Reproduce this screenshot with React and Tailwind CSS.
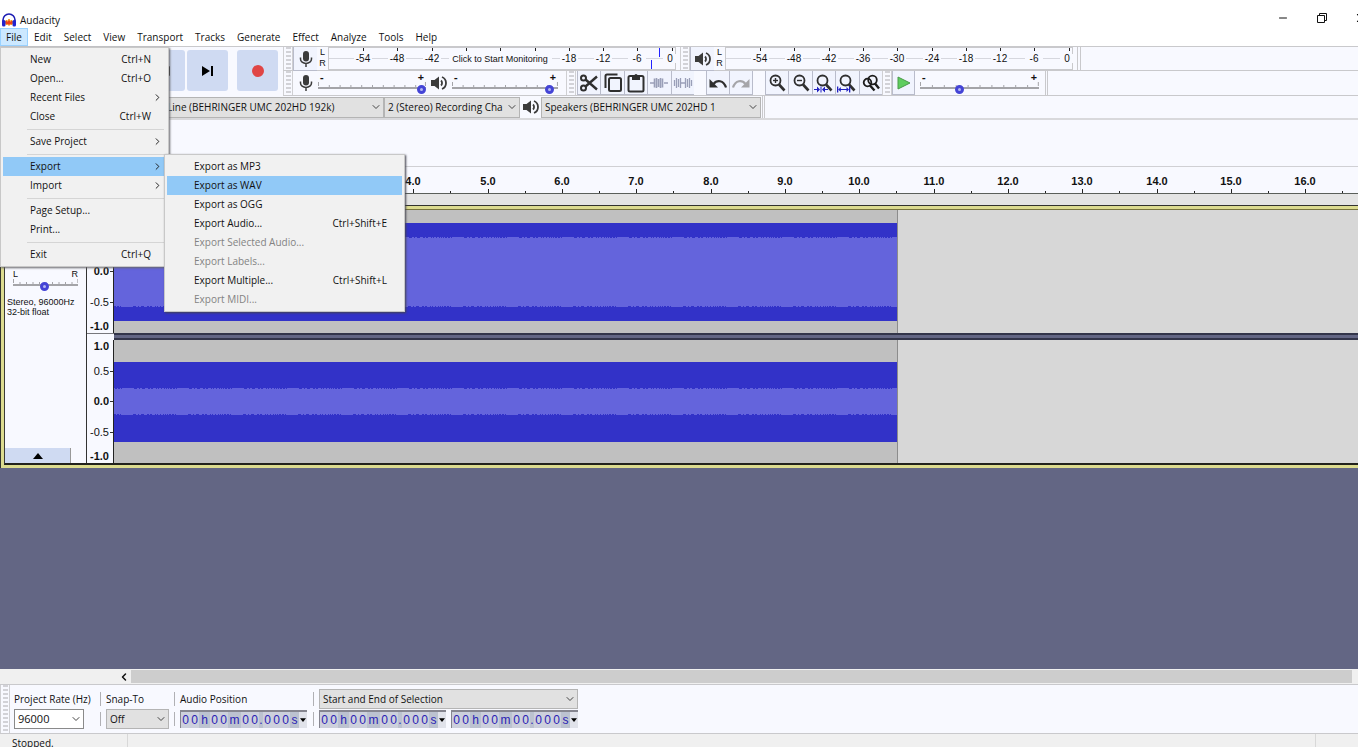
import clsx from 'clsx';
import { ChevronDown, ChevronLeft, ChevronRight, Minus, X } from 'lucide-react';

const MENUS = ['Edit', 'Select', 'View', 'Transport', 'Tracks', 'Generate', 'Effect', 'Analyze', 'Tools', 'Help'];

const FILE_MENU = [
  [
    { label: 'New', keys: 'Ctrl+N' },
    { label: 'Open...', keys: 'Ctrl+O' },
    { label: 'Recent Files', sub: true },
    { label: 'Close', keys: 'Ctrl+W' },
  ],
  [{ label: 'Save Project', sub: true }],
  [
    { label: 'Export', sub: true, active: true },
    { label: 'Import', sub: true },
  ],
  [{ label: 'Page Setup...' }, { label: 'Print...' }],
  [{ label: 'Exit', keys: 'Ctrl+Q' }],
];

const EXPORT_MENU = [
  { label: 'Export as MP3' },
  { label: 'Export as WAV', active: true },
  { label: 'Export as OGG' },
  { label: 'Export Audio...', keys: 'Ctrl+Shift+E' },
  { label: 'Export Selected Audio...', disabled: true },
  { label: 'Export Labels...', disabled: true },
  { label: 'Export Multiple...', keys: 'Ctrl+Shift+L' },
  { label: 'Export MIDI...', disabled: true },
];

//
// ─── ICONS ────────────────────────────────────────────────────────
//
const Logo = () => (
  <svg viewBox="0 0 16 16" className="size-4" aria-hidden="true">
    <path d="M2 10V8a6 6 0 0 1 12 0v2" fill="none" stroke="#1d1db4" strokeWidth="1.6" />
    <path d="M4 10.500l1.500-2.500 1 1.500L8 7l1.500 2.500 1-1.500 1.500 2.500-1.500 2.500-1-1L8 13.500 6.500 12l-1 1z" fill="#f0401c" stroke="#f79a1c" strokeWidth="1" />
    <rect x="1" y="8" width="3.500" height="6.500" rx="1.500" fill="#2222cf" />
    <rect x="11.500" y="8" width="3.500" height="6.500" rx="1.500" fill="#2222cf" />
  </svg>
);

const MicIcon = () => (
  <svg viewBox="0 0 16 18" className="h-[18px] w-4" aria-hidden="true">
    <rect x="5" y="1" width="6" height="10.500" rx="3" fill="#3b3b3b" />
    <path d="M2.500 7.500V9a5.500 4.500 0 0 0 11 0V7.500M8 13.500V17" fill="none" stroke="#3b3b3b" strokeWidth="1.500" />
  </svg>
);

const SpeakerIcon = () => (
  <svg viewBox="0 0 18 16" className="h-4 w-[18px]" aria-hidden="true">
    <path d="M1 5h3.500L9 1.500v13L4.500 11H1z" fill="#3b3b3b" />
    <path d="M11 5.500a3.500 3.500 0 0 1 0 5M12 2a6.500 6.500 0 0 1 0 12" fill="none" stroke="#3b3b3b" strokeWidth="1.800" />
  </svg>
);

const CutIcon = () => (
  <svg viewBox="0 0 20 20" className="size-5" fill="none" stroke="#2f2f2f" strokeWidth="2" aria-hidden="true">
    <circle cx="4.500" cy="5" r="2.500" />
    <circle cx="4.500" cy="15" r="2.500" />
    <path d="M6.500 6.500L18 16.500M6.500 13.500L18 3.500" strokeWidth="2.400" />
  </svg>
);

const CopyIcon = () => (
  <svg viewBox="0 0 20 20" className="size-5" fill="none" stroke="#2f2f2f" strokeWidth="2" aria-hidden="true">
    <rect x="6" y="5" width="12" height="13" rx="1.500" />
    <path d="M2.500 15V3a1.500 1.500 0 0 1 1.500-1.500h10.500" />
  </svg>
);

const PasteIcon = () => (
  <svg viewBox="0 0 20 20" className="size-5" fill="none" stroke="#2f2f2f" strokeWidth="2" aria-hidden="true">
    <rect x="2.500" y="3" width="15" height="15.500" rx="1.500" />
    <path d="M6 2.500h8V7H6z" fill="#2f2f2f" stroke="none" />
    <circle cx="10" cy="2.500" r="1.600" fill="#2f2f2f" stroke="none" />
  </svg>
);

const TrimIcon = () => (
  <svg viewBox="0 0 20 20" className="size-5" stroke="#9a9fb8" aria-hidden="true">
    <path d="M1 10h4M15 10h4" strokeWidth="1.500" />
    <path d="M5.500 5.500v9M7.500 5v10M9.500 6v8M11.500 5v10M13.500 5.500v9" strokeWidth="1.600" />
  </svg>
);

const SilenceIcon = () => (
  <svg viewBox="0 0 20 20" className="size-5" stroke="#9a9fb8" aria-hidden="true">
    <path d="M7 10h6" strokeWidth="1.500" />
    <path d="M1.500 7v6M3.500 5v10M5.500 6v8M7.500 5v10M12.500 5v10M14.500 6v8M16.500 5v10M18.500 7v6" strokeWidth="1.300" />
  </svg>
);

const UndoIcon = ({ redo }) => (
  <svg viewBox="0 0 20 20" className={clsx('size-5', redo && '-scale-x-100')} aria-hidden="true">
    <path d="M5.500 11C9 6.500 15.500 7 18 14.500" fill="none" stroke={redo ? '#a5a5a9' : '#2f2f2f'} strokeWidth="2.200" />
    <path d="M1.500 6v8.500H10z" fill={redo ? '#a5a5a9' : '#2f2f2f'} />
  </svg>
);

const ZoomIcon = ({ kind }) => (
  <svg viewBox="0 0 20 20" className="size-5" fill="none" stroke="#2f2f2f" aria-hidden="true">
    <circle cx="8.500" cy="7.500" r="5" strokeWidth="1.800" />
    <path d="M12 11.500l5.500 6" strokeWidth="2.600" />
    {(kind === 'in' || kind === 'out') && <path d="M6 7.500h5" strokeWidth="1.400" />}
    {kind === 'in' && <path d="M8.500 5v5" strokeWidth="1.400" />}
    {kind === 'selection' && (
      <path d="M0 16h3v-2.500l3 3-3 3V17H0zM14 16h-3v-2.500l-3 3 3 3V17h3zM6.500 13.500h1v6h-1z" stroke="none" fill="#2020c0" />
    )}
    {kind === 'project' && (
      <path
        d="M0 13.500h1.300V19.500H0zM12 13.500h1.300V19.500H12zM1.300 16.500l2.500-2.500v2h5.700v-2l2.500 2.500-2.500 2.500v-2H3.800v2z"
        stroke="none"
        fill="#2020c0"
      />
    )}
  </svg>
);

const ZoomToggleIcon = () => (
  <svg viewBox="0 0 20 20" className="size-5" fill="none" stroke="#1c1c1c" aria-hidden="true">
    <circle cx="6.500" cy="9.500" r="3.800" strokeWidth="1.800" />
    <circle cx="11.500" cy="7" r="4.300" strokeWidth="1.800" />
    <path d="M9 12.500l4.500 5M14 10.500l4 5" strokeWidth="2.400" />
  </svg>
);

//
// ─── SMALL CONTROLS ───────────────────────────────────────────────
//
const Grip = ({ className }) => (
  <span
    className={clsx(
      'w-[10px] shrink-0 border-x border-[#cfcfd2] bg-[repeating-linear-gradient(to_bottom,#d2d2d7_0_2px,transparent_2px_4px)] bg-[length:5px_100%] bg-center bg-no-repeat',
      className,
    )}
  />
);

const ToolButton = ({ label, children, className }) => (
  <button
    aria-label={label}
    className={clsx('flex h-6 items-center justify-center border-b border-l border-[#b9bccb] bg-[#f1f4fe]', className)}
  >
    {children}
  </button>
);

const Slider = ({ label, value, className, ticks = 10 }) => (
  <span className={clsx('grid items-end', className)}>
    <svg className="col-start-1 row-start-1 h-2 w-full" aria-hidden="true">
      {Array.from({ length: ticks + 1 }, (_, i) => (
        <rect key={i} x={i === ticks ? '99%' : `${(i * 100) / ticks}%`} y={i % ticks ? 3 : 0} width="1" height="4" fill="#a4a4a8" />
      ))}
      <rect y="5" width="100%" height="2" fill="#a4a4a8" />
    </svg>
    <input
      type="range"
      aria-label={label}
      defaultValue={value}
      className="col-start-1 row-start-1 m-0 -mb-1 h-[10px] w-full appearance-none bg-transparent [&::-webkit-slider-thumb]:size-[9px] [&::-webkit-slider-thumb]:appearance-none [&::-webkit-slider-thumb]:rounded-full [&::-webkit-slider-thumb]:border-[3px] [&::-webkit-slider-thumb]:border-[#4444d6] [&::-webkit-slider-thumb]:bg-[#b4b8f0]"
    />
  </span>
);

const VolumeSlider = ({ label, value, className }) => (
  <span className={clsx('flex h-[22px] flex-col', className)}>
    <span className="flex justify-between px-[2px] text-[11px] leading-[10px] font-bold" aria-hidden="true">
      <span>-</span>
      <span>+</span>
    </span>
    <Slider label={label} value={value} className="h-2 w-full" />
  </span>
);

const Select = ({ id, label, value, className, white }) => (
  <span className={clsx('grid items-center', className)}>
    <select
      id={id}
      aria-label={label}
      defaultValue={value}
      className={clsx(
        'col-start-1 row-start-1 h-full w-full min-w-0 appearance-none overflow-hidden rounded-none border pr-4 pl-[3px] text-left whitespace-nowrap',
        white ? 'border-[#8a8a8a] bg-white text-[11px]' : 'border-[#b4b4b4] bg-[#e1e1e1]',
      )}
    >
      <option>{value}</option>
    </select>
    <ChevronDown className="pointer-events-none col-start-1 row-start-1 mr-[2px] size-3 justify-self-end" stroke="#444" strokeWidth={2} />
  </span>
);

const Meter = ({ labels, message, peaks = [] }) => (
  <svg width="348" height="23" className="shrink-0 bg-[#f8f9ff] font-['Liberation_Sans',sans-serif] text-[10px]">
    <path d="M0 .5H348M0 22.500H348M.5 0V23M347.500 0V23" stroke="#c9c9cc" />
    <path d="M1 11.500H348" stroke="#d6d7de" />
    {labels.map((db, i) => {
      const x = Math.round(35 + i * 34.3);
      return (
        <g key={i}>
          <rect x={x} y="1" width="1" height="3" fill="#222" />
          {db !== null && (
            <>
              <rect x={x - 9} y="7" width="18" height="9" fill="#f8f9ff" />
              <text x={db === '0' ? x - 2 : x} y="15" textAnchor="middle" fill="#111">
                {db}
              </text>
            </>
          )}
        </g>
      );
    })}
    {message && (
      <>
        <rect x="121" y="6" width="103" height="12" fill="#f8f9ff" />
        <text x="172" y="15" textAnchor="middle" fill="#111" className="text-[9px]">
          {message}
        </text>
      </>
    )}
    {peaks.map((p) => (
      <rect key={p.x} x={p.x} y={p.y} width="1" height="9" fill="#2222ff" />
    ))}
  </svg>
);

const LeftRight = () => (
  <span className="flex w-[11px] shrink-0 flex-col items-center font-['Liberation_Sans',sans-serif] text-[9px] leading-[11px]">
    <span>L</span>
    <span>R</span>
  </span>
);

const TIME = '00h00m00.000s';

const TimeField = ({ label }) => (
  <span
    role="group"
    aria-label={label}
    className="flex h-[18px] w-[127px] border-t-2 border-l border-[#85858f] bg-[#bcc2d0] font-['Liberation_Sans',sans-serif] text-xs leading-4 text-[#2a22b4]"
  >
    {TIME.split('').map((c, i) => (
      <span
        key={i}
        className={clsx(
          'text-center',
          c === '0' && 'w-[9px] bg-[#cdd0dc]',
          c === 'h' && 'w-[11px]',
          c === 'm' && 'w-[13px]',
          c === '.' && 'w-1',
          c === 's' && 'w-[9px]',
        )}
      >
        {c}
      </span>
    ))}
    <button aria-label={`${label} format`} className="flex flex-1 items-center justify-center bg-[#e0e2ea]">
      <svg viewBox="0 0 8 5" className="h-1 w-[6px]">
        <path d="M0 0h8L4 5z" fill="#000" />
      </svg>
    </button>
  </span>
);

//
// ─── MENUS ────────────────────────────────────────────────────────
//
const MenuItem = ({ item }) => (
  <button
    role="menuitem"
    disabled={item.disabled}
    className={clsx(
      'flex h-[19px] w-full items-center justify-between pr-[15px] pl-[27px] text-left whitespace-nowrap',
      item.active && 'bg-[#91c9f7]',
      item.disabled && 'text-[#838383]',
    )}
  >
    <span>{item.label}</span>
    {item.keys && <span>{item.keys}</span>}
    {item.sub && <ChevronRight className="-mr-3 size-[11px]" strokeWidth={2} />}
  </button>
);

const ExportMenu = () => (
  <div
    role="menu"
    className="absolute -top-[3px] left-[161px] z-20 w-[241px] border border-[#c8c8c8] bg-[#f1f1f1] px-[2px] py-[2px] shadow-[1px_1px_2px_#44444f]"
  >
    {EXPORT_MENU.map((item) => (
      <MenuItem key={item.label} item={item} />
    ))}
  </div>
);

const FileMenu = () => (
  <div
    role="menu"
    className="absolute top-full left-0 z-10 w-[169px] border border-[#c8c8c8] bg-[#f1f1f1] p-[2px] shadow-[1px_1px_2px_#66666a]"
  >
    {FILE_MENU.map((group, i) => (
      <div key={i}>
        {i > 0 && (
          <div className="mr-[2px] ml-6 flex h-[6px] items-center">
            <div className="h-px w-full bg-[#d5d5d5]" />
          </div>
        )}
        {group.map((item) => (
          <div key={item.label} className="relative">
            <MenuItem item={item} />
            {item.label === 'Export' && <ExportMenu />}
          </div>
        ))}
      </div>
    ))}
  </div>
);

const TitleBar = () => (
  <div className="flex h-7 items-end justify-between">
    <h1 className="flex items-center gap-[3px] pl-px leading-4">
      <Logo />
      Audacity
    </h1>
    <div className="-mr-[22px] flex">
      <button aria-label="Minimize" className="flex h-5 w-[39px] items-center justify-center">
        <Minus className="size-3" strokeWidth={2} />
      </button>
      <button aria-label="Restore" className="flex h-5 w-[39px] items-center justify-center">
        <svg viewBox="0 0 10 10" className="size-[10px]" fill="none" stroke="#111">
          <path d="M.5 2.500h7v7h-7zM2.500 2.500v-2h7v7h-2" />
        </svg>
      </button>
      <button aria-label="Close" className="flex h-5 w-[39px] items-center justify-center">
        <X className="size-[14px]" strokeWidth={2} />
      </button>
    </div>
  </div>
);

const MenuBar = () => (
  <nav className="flex h-[18px] items-start leading-[19px]">
    <div className="relative">
      <button className="h-[18px] w-7 border border-[#99d1ff] bg-[#cce8ff] leading-[17px]">File</button>
      <FileMenu />
    </div>
    {MENUS.map((name) => (
      <button key={name} className="px-[6px]">
        {name}
      </button>
    ))}
  </nav>
);

//
// ─── TOOLBARS ─────────────────────────────────────────────────────
//
const TRANSPORT = [
  { label: 'Pause', d: 'M15 15h4v12h-4zM22 15h4v12h-4z' },
  { label: 'Play', d: 'M15 14l12 7-12 7z' },
  { label: 'Stop', d: 'M15 15h12v12H15z' },
  { label: 'Skip to Start', d: 'M15 16h2v10h-2zM26 16v10l-8-5z' },
  { label: 'Skip to End', d: 'M15 16v10l8-5zM24 16h2v10h-2z' },
];

const Transport = () => (
  <div className="flex w-[283px] shrink-0 items-start gap-[2px] pt-[3px] pl-[15px]">
    {TRANSPORT.map((b) => (
      <button key={b.label} aria-label={b.label} className="size-[41px] rounded-[3px] bg-[#cfdaf2]">
        <svg viewBox="0 0 41 41" className="size-full">
          <path d={b.d} fill="#000" />
        </svg>
      </button>
    ))}
    <button aria-label="Record" className="ml-[7px] flex size-[41px] items-center justify-center rounded-[3px] bg-[#cfdaf2]">
      <span className="size-3 rounded-full bg-[#e04545]" />
    </button>
  </div>
);

const MeterRow = () => (
  <div className="flex h-6 border-b border-[#c9c9cc]">
    <Grip />
    <ToolButton label="Recording level" className="w-6">
      <MicIcon />
    </ToolButton>
    <LeftRight />
    <Meter
      labels={['-54', '-48', '-42', null, null, null, '-18', '-12', '-6', '0']}
      message="Click to Start Monitoring"
      peaks={[{ x: 331, y: 1 }, { x: 323, y: 13 }]}
    />
    <Grip className="ml-1" />
    <ToolButton label="Playback level" className="w-6">
      <SpeakerIcon />
    </ToolButton>
    <LeftRight />
    <Meter labels={['-54', '-48', '-42', '-36', '-30', '-24', '-18', '-12', '-6', '0']} />
    <span className="ml-1 w-1 border-x border-[#c9c9cc]" />
  </div>
);

const ToolsRow = () => (
  <div className="flex h-[25px] items-center border-b border-[#c9c9cc]">
    <Grip className="h-full" />
    <span className="flex w-[25px] justify-center">
      <MicIcon />
    </span>
    <VolumeSlider label="Recording volume" value={100} className="w-[108px]" />
    <span className="flex w-[26px] justify-center">
      <SpeakerIcon />
    </span>
    <VolumeSlider label="Playback volume" value={96} className="w-[106px]" />
    <Grip className="ml-2 h-full" />
    <div className="ml-px grid w-[117px] grid-cols-5">
      <ToolButton label="Cut"><CutIcon /></ToolButton>
      <ToolButton label="Copy"><CopyIcon /></ToolButton>
      <ToolButton label="Paste"><PasteIcon /></ToolButton>
      <ToolButton label="Trim audio"><TrimIcon /></ToolButton>
      <ToolButton label="Silence audio"><SilenceIcon /></ToolButton>
    </div>
    <div className="ml-3 grid w-[47px] grid-cols-2 border-r border-[#b9bccb]">
      <ToolButton label="Undo"><UndoIcon /></ToolButton>
      <ToolButton label="Redo"><UndoIcon redo /></ToolButton>
    </div>
    <div className="ml-3 grid w-[117px] grid-cols-5">
      <ToolButton label="Zoom in"><ZoomIcon kind="in" /></ToolButton>
      <ToolButton label="Zoom out"><ZoomIcon kind="out" /></ToolButton>
      <ToolButton label="Fit selection"><ZoomIcon kind="selection" /></ToolButton>
      <ToolButton label="Fit project"><ZoomIcon kind="project" /></ToolButton>
      <ToolButton label="Zoom toggle"><ZoomToggleIcon /></ToolButton>
    </div>
    <Grip className="h-full" />
    <ToolButton label="Play at speed" className="w-[23px] border-r">
      <svg viewBox="0 0 14 14" className="size-[14px]">
        <path d="M1 1v12l12-6z" fill="#5fce5f" stroke="#4a9a4a" />
      </svg>
    </ToolButton>
    <VolumeSlider label="Playback speed" value={32} className="ml-[5px] w-[119px]" />
    <span className="ml-[6px] h-full w-[3px] border-x border-[#c9c9cc]" />
  </div>
);

const DeviceRow = () => (
  <div className="flex h-6 items-center border-b-2 border-[#d9d9dc]">
    <Select label="Recording device" value="Line (BEHRINGER UMC 202HD 192k)" className="ml-[163px] h-[21px] w-[221px]" />
    <Select label="Recording channels" value="2 (Stereo) Recording Channels" className="h-[21px] w-[136px]" />
    <span className="flex w-[21px] justify-center">
      <SpeakerIcon />
    </span>
    <Select label="Playback device" value="Speakers (BEHRINGER UMC 202HD 1" className="h-[21px] w-[220px]" />
    <span className="ml-px h-full w-[3px] border-x border-[#c9c9cc]" />
  </div>
);

//
// ─── TRACKS ───────────────────────────────────────────────────────
//
const SECOND = 74.33;

const Ruler = () => (
  <svg className="h-[26px] w-full font-['Liberation_Sans',sans-serif] text-[11px] font-bold">
    {Array.from({ length: 34 }, (_, i) => {
      const x = Math.round(116 + (i * SECOND) / 2);
      return (
        <g key={i}>
          <rect x={x} y={i % 2 ? 24 : 22} width="1" height="4" fill="#222" />
          {i % 2 === 0 && (
            <text x={x} y="18" textAnchor="middle" fill="#111">
              {(i / 2).toFixed(1)}
            </text>
          )}
        </g>
      );
    })}
  </svg>
);

// flat band with a slightly ragged top and bottom edge
const band = (top, bottom, rough) => {
  const jag = (i) => ((i * 7 + ((i * i) % 11)) % 5 > 2 ? rough : 0);
  let d = `M0 ${top}`;
  for (let x = 0; x < 783; x += 1) d += `V${top + jag(x)}H${x + 1}`;
  d += `V${bottom}`;
  for (let x = 783; x > 0; x -= 1) d += `V${bottom - jag(x)}H${x - 1}`;
  return `${d}z`;
};

const Waveform = ({ peak, rms }) => (
  <svg viewBox="0 0 783 123" className="h-[123px] w-[783px] shrink-0 bg-[#c0c0c0]" aria-hidden="true">
    <rect y={peak[0]} width="783" height={peak[1] - peak[0]} fill="#3232c8" />
    <path d={band(rms[0], rms[1], 1)} fill="#6464dc" />
  </svg>
);

const SCALE = [
  { label: '1.0', row: 'h-[13px] font-bold' },
  { label: '0.5', row: 'h-9', tick: true },
  { label: '0.0', row: 'h-6 font-bold', tick: true },
  { label: '-0.5', row: 'h-[38px]', tick: true },
  { label: '-1.0', row: 'h-[10px] font-bold' },
];

const Channel = ({ peak, rms }) => (
  <div className="flex h-[123px] bg-[#d7d7d7]">
    <div className="flex w-[27px] shrink-0 flex-col border-r border-[#222] bg-[#f8f9ff] text-[11px] leading-[11px]">
      {SCALE.map((s) => (
        <span key={s.label} className={clsx('flex items-center justify-end gap-px', s.row, !s.tick && 'pr-1')}>
          {s.label}
          {s.tick && <span className="h-px w-[3px] bg-[#333]" />}
        </span>
      ))}
    </div>
    <Waveform peak={peak} rms={rms} />
    <span className="w-px bg-[#8c8c8c]" />
  </div>
);

const Track = () => (
  <div className="border-t border-l border-[#33332e] bg-[#dcdb8f] pt-[3px] pb-[3px] pl-[3px] font-['Liberation_Sans',sans-serif]">
    <div className="flex border-t border-b-2 border-l border-t-[#77733c] border-b-[#22221c] border-l-[#3a3a34]">
      <div className="flex w-[82px] shrink-0 flex-col border-r border-[#333] bg-[#f8f9ff]">
        <div className="mt-[60px] flex flex-col px-2 text-[9px] leading-[9px]">
          <span className="flex justify-between">
            <span>L</span>
            <span>R</span>
          </span>
          <Slider label="Pan" value={48} className="h-2 w-full" />
        </div>
        <p className="mt-[10px] pl-[2px] text-[9px] leading-[10px] whitespace-nowrap">
          Stereo, 96000Hz
          <br />
          32-bit float
        </p>
        <button aria-label="Collapse track" className="mt-auto flex h-[15px] w-[66px] items-center justify-center border-r border-[#999] bg-[#cfdaf2]">
          <svg viewBox="0 0 10 6" className="h-[6px] w-[10px]">
            <path d="M0 6h10L5 0z" fill="#000" />
          </svg>
        </button>
      </div>
      <div className="min-w-0 flex-1 overflow-hidden">
        <Channel peak={[13, 111]} rms={[27, 97]} />
        <div className="flex h-[7px]">
          <div className="w-[27px] border-t border-[#77777c] bg-[#f8f9ff]" />
          <div className="flex-1 border-y-2 border-[#33354a] bg-[#636684]" />
        </div>
        <Channel peak={[22, 102]} rms={[48, 75]} />
      </div>
    </div>
  </div>
);

//
// ─── BOTTOM BARS ──────────────────────────────────────────────────
//
const Divider = () => <span className="h-[14px] w-px bg-[#b0b0b4]" />;

const SelectionBar = () => (
  <div className="flex h-[50px] shrink-0 border-y border-y-[#c9c9cc] bg-[#f8f9ff]">
    <Grip />
    <div className="grid grid-cols-[86px_6px_68px_6px_133px_6px_259px] grid-rows-[20px_20px] items-center pt-1 pl-1">
      <label htmlFor="rate" className="whitespace-nowrap">Project Rate (Hz)</label>
      <Divider />
      <label htmlFor="snap">Snap-To</label>
      <Divider />
      <span>Audio Position</span>
      <Divider />
      <Select label="Selection mode" value="Start and End of Selection" className="h-5" />
      <Select id="rate" label="Project rate" value="96000" white className="h-5 w-[70px]" />
      <Divider />
      <Select id="snap" label="Snap to" value="Off" className="h-5 w-[63px]" />
      <Divider />
      <TimeField label="Audio position" />
      <Divider />
      <div className="flex justify-between">
        <TimeField label="Selection start" />
        <TimeField label="Selection end" />
      </div>
    </div>
  </div>
);

export default function App() {
  return (
    <div className="flex h-screen flex-col overflow-hidden bg-white font-['Open_Sans','Noto_Sans',sans-serif] text-[10px] text-[#111]">
      <TitleBar />
      <MenuBar />
      <header className="border-t border-[#c9c9cc] bg-[#f8f9ff]">
        <div className="flex">
          <Transport />
          <div className="min-w-0 flex-1">
            <MeterRow />
            <ToolsRow />
          </div>
        </div>
        <DeviceRow />
        <div className="h-[47px] border-b border-[#d0d0d4]" />
        <Ruler />
      </header>
      <main className="flex min-h-0 flex-1 flex-col bg-[#636684]">
        <div className="h-3 shrink-0 border-t border-[#5a5f5a] bg-[#e4e4e4]" />
        <Track />
      </main>
      <div className="flex h-[15px] shrink-0 items-center bg-[#f0f0f0] pr-[6px]">
        <button aria-label="Scroll left" className="flex w-[131px] justify-end pr-px">
          <ChevronLeft className="size-3" strokeWidth={3} />
        </button>
        <span className="h-[13px] flex-1 bg-[#cdcdcd]" />
      </div>
      <SelectionBar />
      <footer className="flex h-[13px] shrink-0 bg-[#f0f0f0] pl-3 leading-[19px]">
        <span className="w-[116px] border-r border-[#d8d8d8]">Stopped.</span>
        <span className="mr-[42px] flex-1 border-r border-[#d8d8d8]" />
      </footer>
    </div>
  );
}
